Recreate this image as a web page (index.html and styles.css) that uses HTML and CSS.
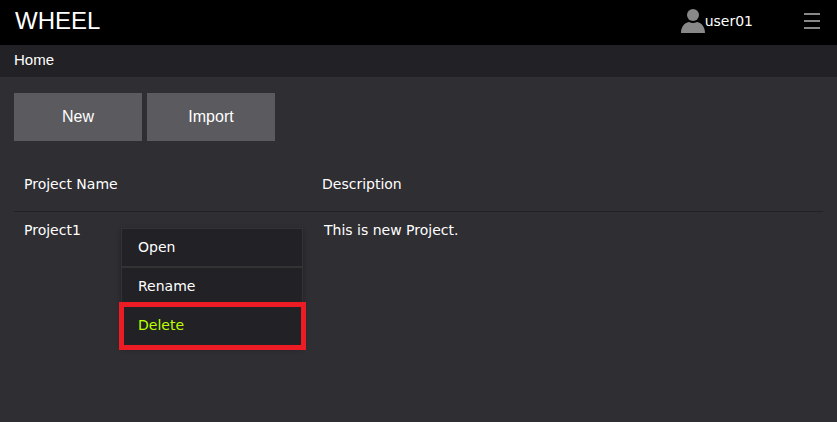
FILE: index.html
```
<!DOCTYPE html>
<html lang="en">
<head>
<meta charset="utf-8">
<title>WHEEL</title>
<link rel="stylesheet" href="styles.css">
</head>
<body>
<header class="topbar">
  <h1 class="brand">WHEEL</h1>
  <div class="account">
    <svg class="avatar" viewBox="0 0 24 24" aria-hidden="true"><circle cx="12" cy="6" r="6"/><path d="M0 24C0 18 3 14 8 13Q12 15 16 13C21 14 24 18 24 24Z"/></svg>
    <span>user01</span>
  </div>
  <button class="menu-button" type="button" aria-label="Menu">
    <svg viewBox="0 0 16 16" aria-hidden="true"><path d="M0 0h16v2H0zM0 7h16v2H0zM0 14h16v2H0z"/></svg>
  </button>
</header>
<nav class="breadcrumb"><a href="#">Home</a></nav>
<main class="content">
  <div class="actions">
    <button class="action" type="button">New</button>
    <button class="action" type="button">Import</button>
  </div>
  <table class="projects">
    <thead>
      <tr><th class="name" scope="col">Project Name</th><th scope="col">Description</th></tr>
    </thead>
    <tbody>
      <tr><td>Project1</td><td class="description">This is new Project.</td></tr>
    </tbody>
  </table>
</main>
<div class="context-menu">
  <button class="item" type="button">Open</button>
  <button class="item" type="button">Rename</button>
  <button class="item active" type="button">Delete</button>
</div>
</body>
</html>
```

FILE: styles.css
```
* {
  box-sizing: border-box;
}

body {
  margin: 0;
  min-height: 100vh;
  background: #2f2e33;
  color: #fff;
  font: 14px/20px "DejaVu Sans", sans-serif;
}

button {
  border: 0;
  color: inherit;
  font: inherit;
}

.topbar {
  display: flex;
  align-items: center;
  height: 45px;
  padding: 0 17px 3px 15px;
  background: #000;
}

.brand {
  flex: 1;
  margin: 0;
  font: 24px/28px "Liberation Sans", sans-serif;
}

.account {
  display: flex;
  align-items: center;
  margin-right: 51px;
}

.avatar {
  width: 24px;
  height: 24px;
  fill: #888;
}

.menu-button {
  padding: 0;
  background: none;
}

.menu-button svg {
  display: block;
  width: 16px;
  height: 16px;
  fill: #888;
}

.breadcrumb {
  height: 32px;
  padding: 5px 14px;
  background: #222125;
  font: 15px/20px "Liberation Sans", sans-serif;
}

.breadcrumb a {
  color: inherit;
  text-decoration: none;
}

.content {
  padding: 16px 14px;
}

.actions {
  display: flex;
  gap: 5px;
}

.action {
  width: 128px;
  height: 48px;
  background: #5b5a5f;
  font: 16px/20px "Liberation Sans", sans-serif;
}

.projects {
  width: 100%;
  margin-top: 16px;
  border-collapse: collapse;
  table-layout: fixed;
}

.projects th {
  height: 54px;
  padding: 0 10px;
  border-bottom: 1px solid #222125;
  font-weight: normal;
  text-align: left;
}

.projects .name {
  width: 298px;
}

.projects td {
  padding: 8px 10px;
}

.projects .description {
  padding-left: 12px;
}

.context-menu {
  position: absolute;
  top: 228px;
  left: 121px;
  width: 182px;
  border: 1px solid #333;
  background: #222125;
  box-shadow: 0 2px 5px rgba(0, 0, 0, 0.3);
}

.item {
  display: block;
  width: 100%;
  height: 39px;
  padding: 0 16px 2px;
  border-bottom: 2px solid #333;
  background: #222125;
  text-align: left;
}

.item.active {
  position: relative;
  border-bottom-width: 1px;
  color: #bf0;
}

.item.active::after {
  position: absolute;
  inset: -5px -4px -5px -3px;
  border: 5px solid #ed1c24;
  content: "";
}
```
